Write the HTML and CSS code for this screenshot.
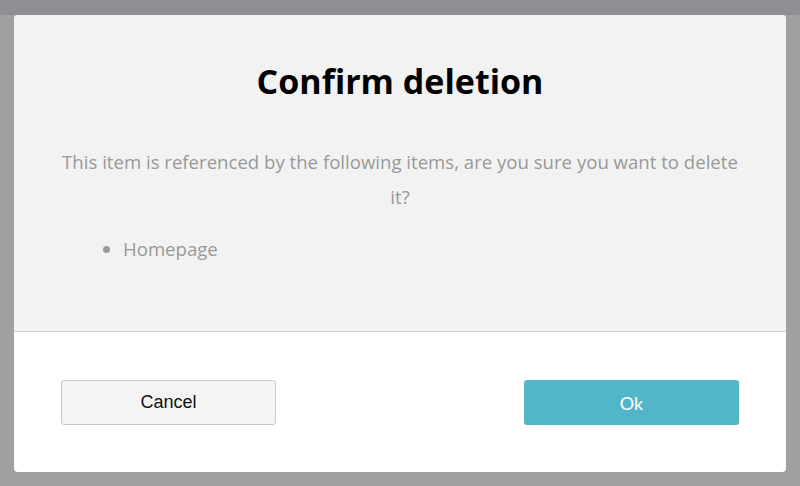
FILE: index.html
```html
<!DOCTYPE html>
<html>
<head>
<meta charset="utf-8">
<link rel="stylesheet" href="styles.css">
</head>
<body>
<div class="topbar"></div>
<div class="overlay">
  <div class="modal">
    <div class="modal-body">
      <h1 class="title">Confirm deletion</h1>
      <p class="message">This item is referenced by the following items, are you sure you want to delete it?</p>
      <ul class="refs">
        <li>Homepage</li>
      </ul>
    </div>
    <div class="modal-footer">
      <button class="btn btn-cancel">Cancel</button>
      <button class="btn btn-ok">Ok</button>
    </div>
  </div>
</div>
</body>
</html>
```

FILE: styles.css
```css
html, body {
  margin: 0;
  padding: 0;
  height: 486px;
  overflow: hidden;
  background: #a0a0a0;
  font-family: "Open Sans", sans-serif;
}
.topbar {
  height: 15px;
  background: #8e8f93;
}
.overlay {
  padding: 0 14px;
}
.modal {
  background: #ffffff;
  border-radius: 4px;
  overflow: hidden;
  height: 457px;
  display: flex;
  flex-direction: column;
}
.modal-body {
  background: #f2f2f2;
  height: 317px;
  box-sizing: border-box;
  padding: 38px 44px 0;
  border-bottom: 1px solid #d2d2d2;
}
.title {
  margin: 0;
  text-align: center;
  font-size: 34px;
  font-weight: 700;
  color: #000;
  line-height: 56px;
}
.message {
  margin: 35px 0 0;
  text-align: center;
  font-size: 18.6px;
  line-height: 35px;
  color: #999999;
}
.refs {
  margin: 17px 0 0;
  padding-left: 65px;
  font-size: 18.6px;
  line-height: 35px;
  color: #999999;
}
.modal-footer {
  flex: 1;
  display: flex;
  justify-content: space-between;
  align-items: flex-start;
  padding: 48px 47px 0;
}
.btn {
  width: 215px;
  height: 45px;
  border-radius: 3px;
  font-size: 18px;
  cursor: pointer;
}
.btn-cancel {
  background: #f4f4f4;
  border: 1px solid #c8c8c8;
  color: #111;
  font-family: "Liberation Sans", Arial, sans-serif;
}
.btn-ok {
  background: #52b6ca;
  border: none;
  color: #ffffff;
  font-family: Lato, sans-serif;
}
```
